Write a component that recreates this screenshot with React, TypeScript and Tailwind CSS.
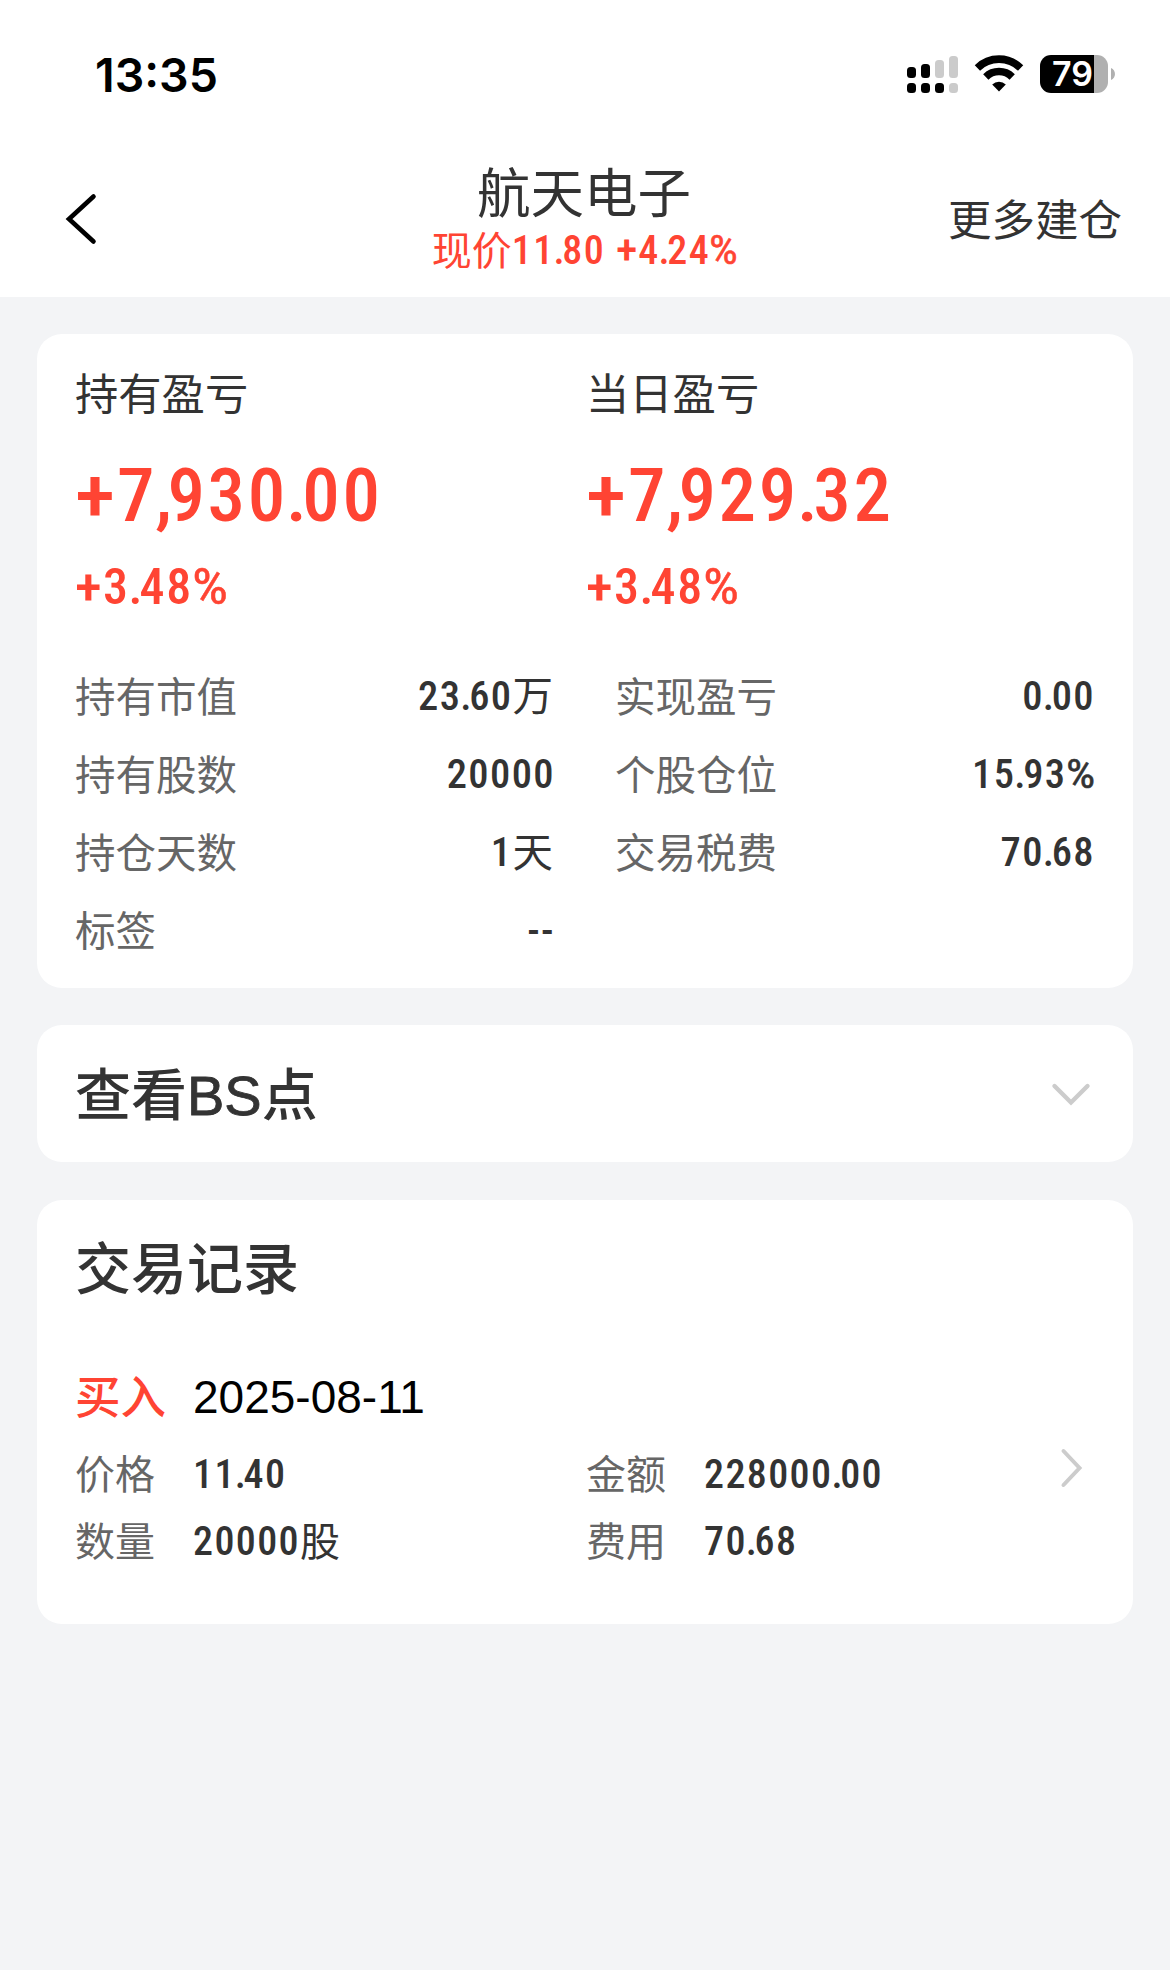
import { Fragment } from 'react';

/** Figures in a condensed face; separators sit tighter than the digits, signs run wider. */
function Num({ value, className = '' }: { value: string; className?: string }) {
  return (
    <span
      className={`font-["Roboto_Condensed","Noto_Sans_CJK_SC",sans-serif] font-medium tracking-[0.035em] whitespace-pre ${className}`}
    >
      {value.split(/([.,+%])/).map((part, i) => {
        if (part === '.' || part === ',') {
          return <span key={i} className="-ml-[0.025em] tracking-[-0.06em]">{part}</span>;
        }
        if (part === '+') {
          return <span key={i} className="mr-[0.04em] inline-block origin-left scale-x-110">{part}</span>;
        }
        if (part === '%') {
          return <span key={i} className="mr-[0.09em] -ml-[0.02em] inline-block origin-left scale-x-[1.14] font-normal tracking-normal [-webkit-text-stroke:0.5px_currentColor]">{part}</span>;
        }
        return <Fragment key={i}>{part}</Fragment>;
      })}
    </span>
  );
}

function StatusBar() {
  return (
    <div className="flex h-[148px] items-center justify-between pr-[55px] pl-[95px]">
      <span className='pt-[3px] font-["Inter",sans-serif] text-[46.5px] leading-none font-semibold text-black'>13:35</span>
      <div className="flex items-center">
        <svg width="51" height="38" viewBox="0 0 51 38" className="mr-[16px]">
          <g fill="#000">
            <rect x="0" y="12" width="9" height="11" rx="3.5" />
            <rect x="14" y="9" width="9" height="14" rx="3.5" />
            <rect x="0" y="28" width="9" height="10" rx="3.5" />
            <rect x="14" y="28" width="9" height="10" rx="3.5" />
            <rect x="28" y="28" width="9" height="10" rx="3.5" />
          </g>
          <g fill="#cbcbcb">
            <rect x="28" y="5" width="9" height="18" rx="3.5" />
            <rect x="42" y="1" width="9" height="22" rx="3.5" />
            <rect x="42" y="28" width="9" height="10" rx="3.5" />
          </g>
        </svg>
        <svg width="50" height="38" viewBox="0 0 50 38" className="mr-[16px]">
          <g fill="none" stroke="#000" strokeWidth="7.6">
            <path d="M3.4 12.9A31 31 0 0 1 46.6 12.9" />
            <path d="M11.8 21.9A19 19 0 0 1 38.2 21.9" />
          </g>
          <path d="M25 36.5L18.2 29.4A10 10 0 0 1 31.8 29.4Z" fill="#000" />
        </svg>
        <div className="flex h-[38px] w-[68px] items-center rounded-[11px] bg-[linear-gradient(to_right,#000_54px,#b0b0b0_54px)] pl-[12px]">
          <span className='font-["Inter",sans-serif] text-[34px] leading-[38px] font-semibold text-white'>79</span>
        </div>
        <svg width="4" height="12" viewBox="0 0 4 12" className="ml-[3px]">
          <path d="M0 0C5.3 2 5.3 10 0 12Z" fill="#b0b0b0" />
        </svg>
      </div>
    </div>
  );
}

function Header() {
  return (
    <header className="grid h-[149px] grid-cols-[1fr_auto_1fr] px-[64px]">
      <svg width="34" height="54" viewBox="0 0 34 54" className="mt-[44px]">
        <path d="M29.5 4.5L5 27L29.5 49.5" fill="none" stroke="#000" strokeWidth="4.6" strokeLinecap="round" strokeLinejoin="miter" />
      </svg>
      <div className="flex flex-col items-center">
        <h1 className="mt-[17px] pr-[2px] text-[53.5px] leading-[60px] font-normal text-[#333]">航天电子</h1>
        <div className="-mt-[2px] flex h-[56px] items-center text-[40px] leading-[56px] text-[#ff4433]">
          <span>现价</span>
          <Num value="11.80 +4.24%" />
        </div>
      </div>
      <button className="mt-[47px] -mr-[16px] h-[52px] justify-self-end text-[43.5px] leading-[52px] text-[#333]">更多建仓</button>
    </header>
  );
}

function Profit({ label, amount, percent }: { label: string; amount: string; percent: string }) {
  return (
    <div className="flex flex-col">
      <span className="text-[43.3px] leading-[56px] text-[#333]">{label}</span>
      <Num value={amount} className="mt-[28px] text-[75px] leading-[88px] text-[#ff4433]" />
      <Num value={percent} className="mt-[20px] text-[50px] leading-[56px] text-[#ff4433]" />
    </div>
  );
}

function Stat({ label, value, unit }: { label: string; value: string; unit?: string }) {
  return (
    <div className="flex h-[78px] items-center justify-between text-[40.5px] leading-[78px]">
      <span className="pt-[3px] text-[#666]">{label}</span>
      <span className="flex text-[#333]">
        <Num value={value} className={unit ? '' : '-mr-[2px]'} />
        {unit && <span className="pt-px">{unit}</span>}
      </span>
    </div>
  );
}

function Field({ label, value, unit }: { label: string; value: string; unit?: string }) {
  return (
    <div className="flex h-[67px] text-[40px] leading-[67px]">
      <span className="w-[118px] pt-px text-[#666]">{label}</span>
      <span className="flex text-[#333]">
        <Num value={value} />
        {unit && <span className="pt-px">{unit}</span>}
      </span>
    </div>
  );
}

export default function App() {
  return (
    <div className='flex min-h-[1970px] w-full flex-col bg-[#f3f4f6] font-["Liberation_Sans","Noto_Sans_CJK_SC",sans-serif]'>
      <div className="bg-white">
        <StatusBar />
        <Header />
      </div>
      <main className="flex flex-col gap-[38px] px-[37px] pt-[37px]">
        <section className="-mb-px h-[654px] rounded-[25px] bg-white px-[38px] pt-[33px]">
          <div className="grid grid-cols-[511px_1fr]">
            <Profit label="持有盈亏" amount="+7,930.00" percent="+3.48%" />
            <Profit label="当日盈亏" amount="+7,929.32" percent="+3.48%" />
          </div>
          <div className="mt-[42px] grid grid-cols-[478px_478px] gap-x-[62px]">
            <Stat label="持有市值" value="23.60" unit="万" />
            <Stat label="实现盈亏" value="0.00" />
            <Stat label="持有股数" value="20000" />
            <Stat label="个股仓位" value="15.93%" />
            <Stat label="持仓天数" value="1" unit="天" />
            <Stat label="交易税费" value="70.68" />
            <Stat label="标签" value="--" />
          </div>
        </section>

        <section className="flex h-[137px] items-center justify-between rounded-[25px] bg-white pr-[41px] pl-[38px]">
          <h2 className="pt-[4px] text-[56px] leading-[80px] font-medium text-[#333]">
            查看<span className="font-normal [-webkit-text-stroke:0.8px_#333]">BS</span>点
          </h2>
          <svg width="42" height="28" viewBox="0 0 42 28">
            <path d="M4.5 6L21 22.5L37.5 6" fill="none" stroke="#ccc" strokeWidth="4.4" strokeLinecap="round" />
          </svg>
        </section>

        <section className="h-[424px] rounded-[25px] bg-white px-[38px] pt-[30px]">
          <h2 className="text-[56px] leading-[80px] font-medium text-[#333]">交易记录</h2>
          <div className="mt-[57px] flex h-[60px] items-center gap-[27px] leading-[60px]">
            <span className="pt-[3px] text-[45.5px] font-medium text-[#ff4433]">买入</span>
            <span className="text-[46px] text-black">2025-08-11</span>
          </div>
          <div className="flex items-start justify-between pt-[14px] pr-[12px]">
            <div className="grid grid-cols-[511px_auto]">
              <Field label="价格" value="11.40" />
              <Field label="金额" value="228000.00" />
              <Field label="数量" value="20000" unit="股" />
              <Field label="费用" value="70.68" />
            </div>
            <svg width="24" height="42" viewBox="0 0 24 42" className="mt-[6px]">
              <path d="M4.5 4L20.5 21L4.5 38" fill="none" stroke="#ccc" strokeWidth="4" strokeLinecap="round" />
            </svg>
          </div>
        </section>
      </main>
    </div>
  );
}
